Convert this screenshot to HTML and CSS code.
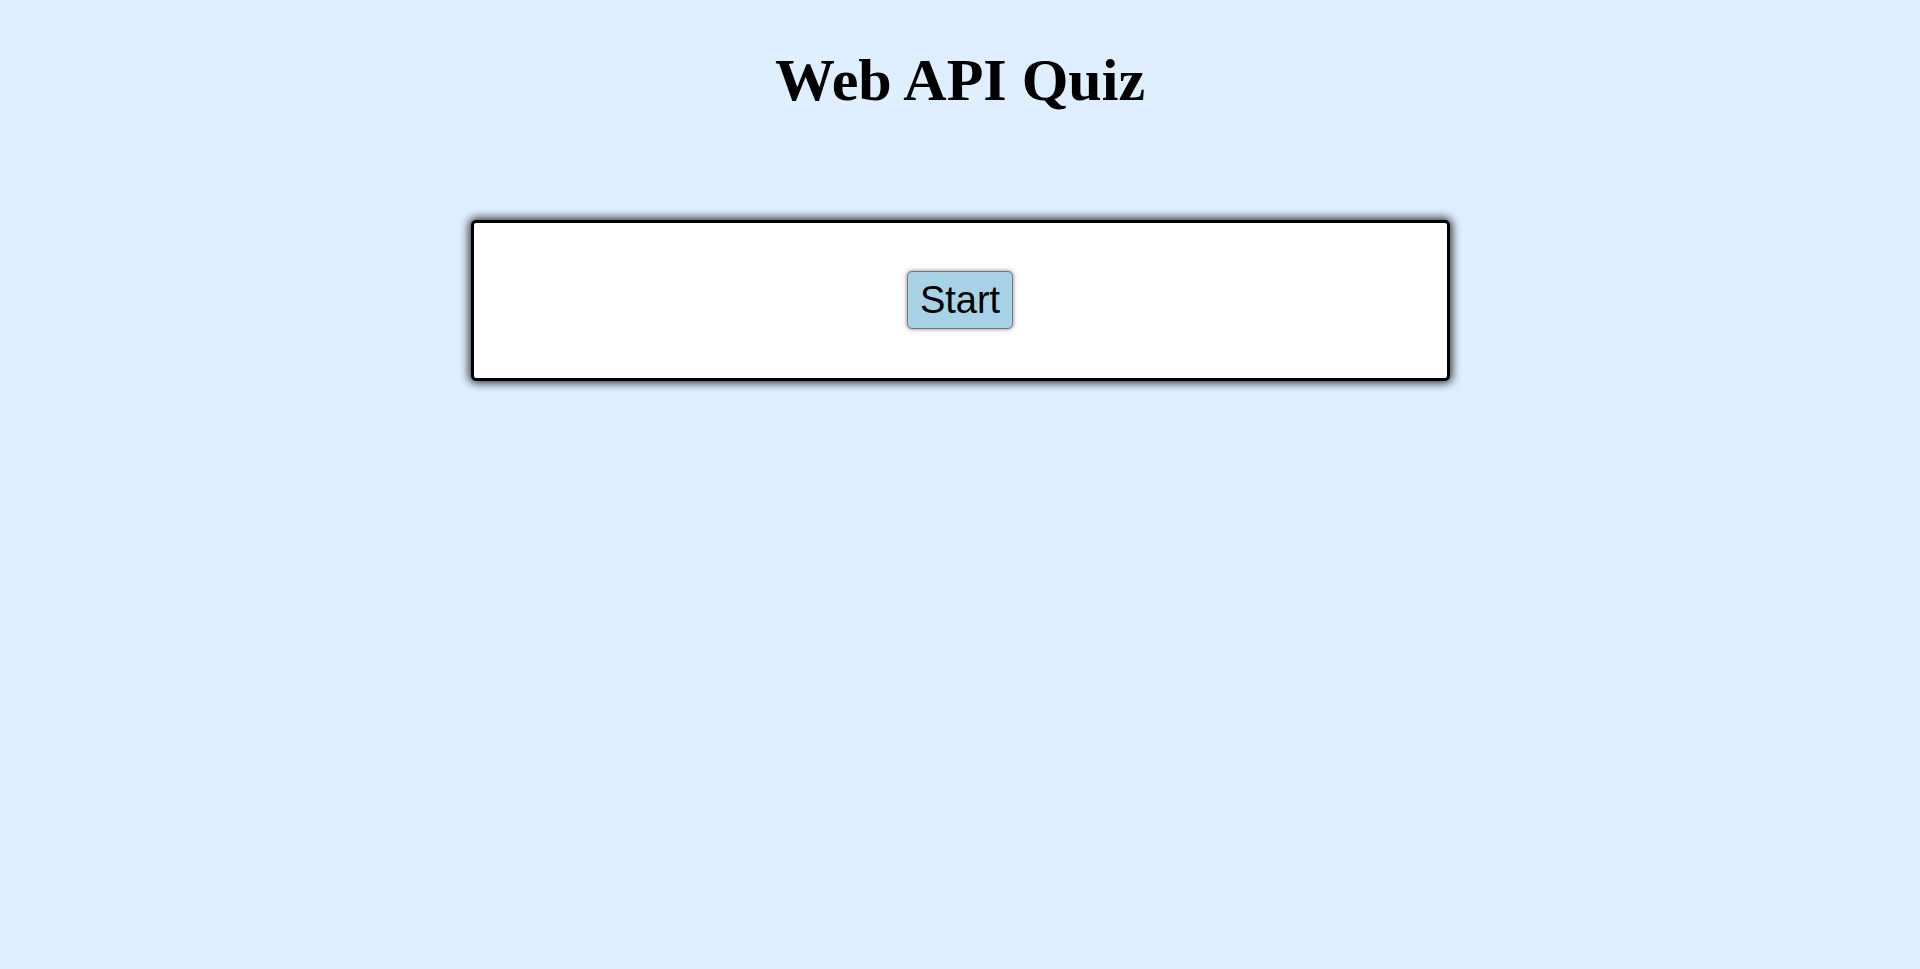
FILE: index.html
```html
<!DOCTYPE html>
<html lang="en">
<head>
<meta charset="utf-8">
<title>Web API Quiz</title>
<link rel="stylesheet" href="styles.css">
</head>
<body>
<h1 class="title">Web API Quiz</h1>
<main class="quiz-card">
  <button class="start-btn" type="button">Start</button>
</main>
</body>
</html>
```

FILE: styles.css
```css
html, body {
  margin: 0;
  padding: 0;
}
body {
  background: #dfefff;
  min-height: 969px;
  padding-top: 47px;
  box-sizing: border-box;
}
.title {
  margin: 0;
  font-family: "Liberation Serif", "Times New Roman", serif;
  font-weight: bold;
  font-size: 60px;
  line-height: 66px;
  text-align: center;
  color: #000;
}
.quiz-card {
  width: 979px;
  box-sizing: border-box;
  margin: 107px auto 0;
  background: #fff;
  border: 3px solid #000;
  border-radius: 5px;
  box-shadow: 0 0 10px 2px rgba(0, 0, 0, 0.8);
  padding: 48px 0 49px;
  display: flex;
  justify-content: center;
}
.start-btn {
  font-family: "Liberation Sans", Arial, sans-serif;
  font-size: 38px;
  line-height: 48px;
  padding: 4px 12px;
  background: #a8d3e7;
  color: #000;
  border: 1px solid #777;
  border-radius: 5px;
  box-shadow: 0 0 4px rgba(0, 0, 0, 0.5);
  cursor: pointer;
}
```
